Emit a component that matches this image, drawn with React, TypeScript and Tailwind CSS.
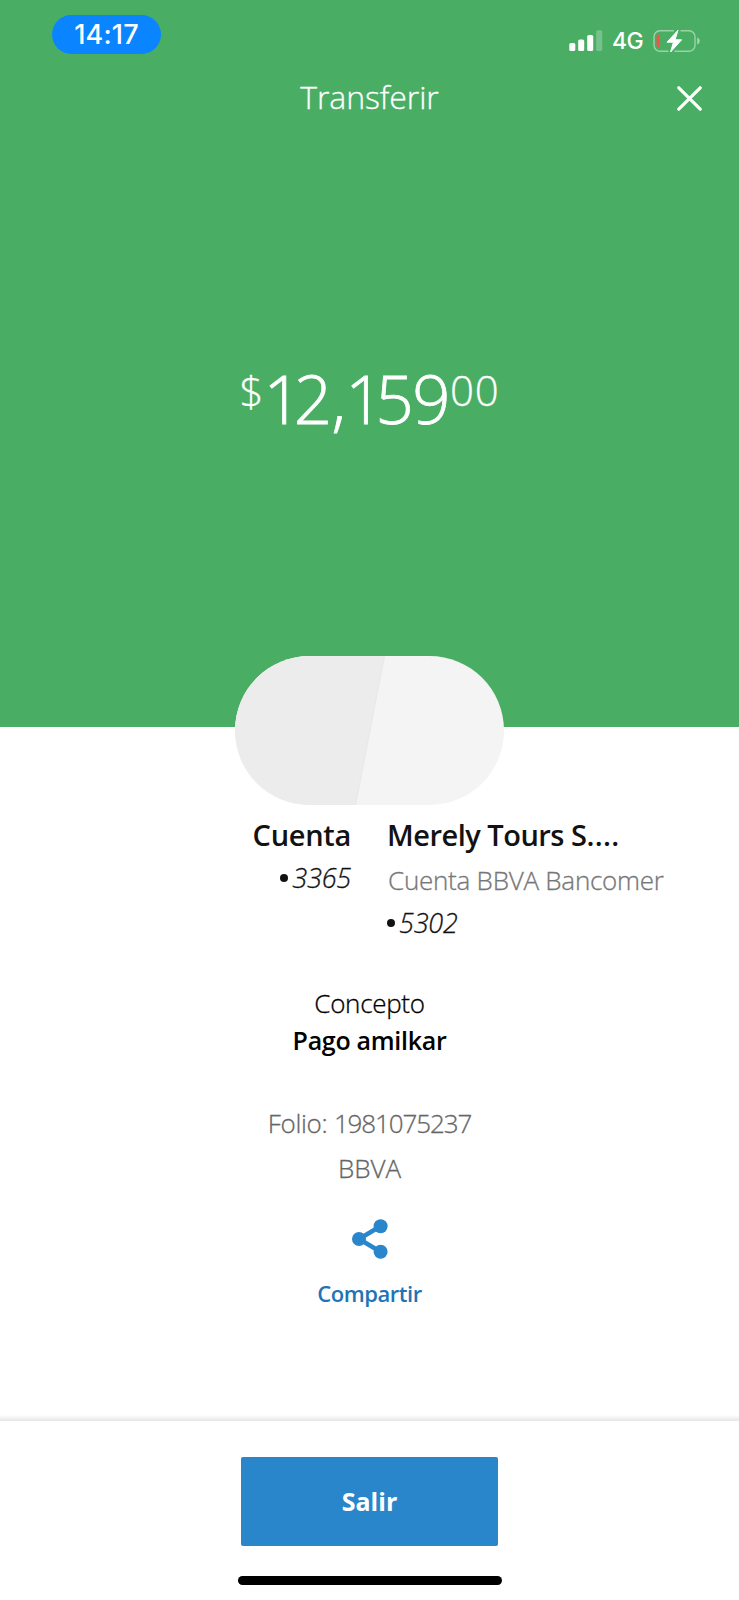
import { useState } from "react";

interface AccountProps {
  digits: string;
}

function SignalIcon() {
  return (
    <svg width="34" height="22" viewBox="0 0 34 22" fill="white">
      <rect x="0.3" y="13" width="6" height="8" rx="1.6" />
      <rect x="9.2" y="9.5" width="6" height="11.5" rx="1.6" />
      <rect x="18.2" y="5" width="6" height="16" rx="1.6" />
      <rect x="27.2" y="0.3" width="6" height="20.7" rx="1.6" opacity="0.25" />
    </svg>
  );
}

function BatteryIcon() {
  return (
    <svg width="48" height="24" viewBox="0 0 48 24" fill="none">
      <path
        d="M22 1.7H8a6 6 0 0 0-6 6v8.6a6 6 0 0 0 6 6h8.5M28.5 1.7H37a6 6 0 0 1 6 6v8.6a6 6 0 0 1-6 6H22.5"
        stroke="white"
        strokeOpacity="0.45"
        strokeWidth="1.4"
      />
      <path d="M45.2 8.5v7c1.6-.6 2.5-2 2.5-3.5s-.9-2.9-2.5-3.5z" fill="white" fillOpacity="0.5" />
      <path d="M7.4 5v14c-1.9-.4-2.9-1.5-2.9-3.5v-7c0-2 1-3.1 2.9-3.5z" fill="#f4524a" />
      <path
        d="M26 1.2 15 13.2h6.4L18.6 23 29.6 10.8h-6.5z"
        fill="white"
        stroke="white"
        strokeWidth="1"
        strokeLinejoin="round"
      />
    </svg>
  );
}

function ShareIcon() {
  return (
    <svg width="36" height="40" viewBox="0 0 36 40" fill="#2a86ca">
      <path d="M28 7.5 7 20l21 12.5" fill="none" stroke="#2a86ca" strokeWidth="4.5" />
      <circle cx="7" cy="20" r="7" />
      <circle cx="28.6" cy="7.3" r="7" />
      <circle cx="28.6" cy="32.7" r="7" />
    </svg>
  );
}

function AccountNumber({ digits }: AccountProps) {
  return (
    <span className="inline-flex items-center gap-1 text-[27px] font-light italic leading-10 tracking-[-0.2px] text-[#121212] [-webkit-text-stroke:0.3px]">
      <span className="size-[8px] rounded-full bg-[#121212]" />
      {digits}
    </span>
  );
}

export default function App() {
  const [open, setOpen] = useState(true);

  if (!open) return null;

  return (
    <div className="flex h-[1600px] w-[739px] flex-col overflow-hidden bg-white font-['Open_Sans',sans-serif]">
      {/* Header */}
      <header className="h-[727px] shrink-0 bg-[#49ae64] text-white">
        <div className="flex h-[68px] items-start justify-between pl-[52px] pr-[39px] pt-[15px]">
          <div className="flex h-[39px] w-[109px] items-center justify-center rounded-full bg-[#0a84ff] pt-px font-['Inter',sans-serif] text-[27px] font-medium tracking-[0.2px]">
            14:17
          </div>
          <div className="flex items-center pt-[13px]">
            <SignalIcon />
            <span className="ml-[9px] w-[32px] whitespace-nowrap pt-px font-['Inter',sans-serif] text-[23px] font-medium leading-6 tracking-[-0.5px]">
              4G
            </span>
            <span className="ml-2">
              <BatteryIcon />
            </span>
          </div>
        </div>

        <div className="grid grid-cols-[1fr_auto_1fr] items-center px-[37px] pt-2">
          <h1 className="relative -top-px col-start-2 text-[32px] font-light leading-[44px] tracking-[-0.1px] [-webkit-text-stroke:0.3px]">
            Transferir
          </h1>
          <button onClick={() => setOpen(false)} aria-label="Cerrar" className="justify-self-end">
            <svg width="25" height="25" viewBox="0 0 25 25" stroke="white" strokeWidth="3.2" strokeLinecap="round">
              <path d="M1.8 1.8l21.4 21.4M23.2 1.8 1.8 23.2" />
            </svg>
          </button>
        </div>

        <div className="flex items-start justify-center pt-[238px] font-light">
          <span className="pt-[5px] text-[42px] leading-[56px] [-webkit-text-stroke:0.3px]">$</span>
          <span className="text-[67px] leading-[80px] [-webkit-text-stroke:0.8px]">
            <span className="tracking-[-8px]">1</span>
            <span className="tracking-[-0.5px]">2,</span>
            <span className="tracking-[-8px]">1</span>
            <span className="tracking-[-1.5px]">59</span>
          </span>
          <span className="pl-px pt-1 text-[42px] leading-[56px] tracking-[0.8px] [-webkit-text-stroke:0.3px]">00</span>
        </div>
      </header>

      {/* Origin / destination avatars */}
      <div className="relative mx-auto -mt-[71px] h-[149px] w-[269px] shrink-0 overflow-hidden rounded-full bg-[#f4f4f4]">
        <svg width="269" height="149" viewBox="0 0 269 149">
          <path d="M0 0h149.5L120.5 149H0z" fill="#ececec" />
          <path d="M149.5 0 120.5 149" stroke="#e7e7e7" />
        </svg>
      </div>

      <section className="grid shrink-0 grid-cols-[351px_1fr] gap-x-[36px] pt-2">
        <div className="flex flex-col items-end">
          <h2 className="text-[29px] font-semibold leading-[44px] tracking-[-0.3px] text-[#121212]">Cuenta</h2>
          <div className="pt-px">
            <AccountNumber digits="3365" />
          </div>
        </div>
        <div className="flex flex-col items-start">
          <h2 className="whitespace-nowrap text-[29px] font-semibold leading-[44px] tracking-[-0.5px] text-[#121212]">
            Merely Tours S<span className="tracking-[0.3px]">....</span>
          </h2>
          <p className="whitespace-nowrap pl-px pt-px text-[26px] font-light leading-[45px] tracking-[-0.25px] text-[#777] [-webkit-text-stroke:0.3px]">
            Cuenta BBVA Bancomer
          </p>
          <AccountNumber digits="5302" />
        </div>
      </section>

      <section className="shrink-0 pt-[41px] text-center text-black">
        <p className="text-[26px] font-light leading-[38px] tracking-[-0.3px] [-webkit-text-stroke:0.3px]">Concepto</p>
        <p className="text-[25px] font-semibold leading-[36px] tracking-[-0.3px]">Pago amilkar</p>
      </section>

      <section className="shrink-0 pt-[43px] text-center text-[26px] font-light leading-[45px] text-[#666] [-webkit-text-stroke:0.3px]">
        <p className="tracking-[-0.3px]">
          Folio: <span className="tracking-[-1.1px]">1981075237</span>
        </p>
        <p>BBVA</p>
      </section>

      <button className="mx-auto mt-[28px] flex shrink-0 flex-col items-center">
        <span className="pl-px">
          <ShareIcon />
        </span>
        <span className="mt-[16px] text-[22px] font-semibold leading-9 tracking-[-0.45px] text-[#2273b5]">Compartir</span>
      </button>

      {/* Footer */}
      <footer className="mt-auto flex h-[185px] shrink-0 flex-col items-center">
        <div className="h-[6px] w-full bg-gradient-to-b from-white to-[#e6e6e6]" />
        <button className="mt-[36px] h-[89px] w-[257px] rounded-[2px] bg-[#2a86ca] text-[25px] font-bold text-white">
          Salir
        </button>
        <div className="mt-[30px] h-[9px] w-[264px] rounded-full bg-black" />
      </footer>
    </div>
  );
}
